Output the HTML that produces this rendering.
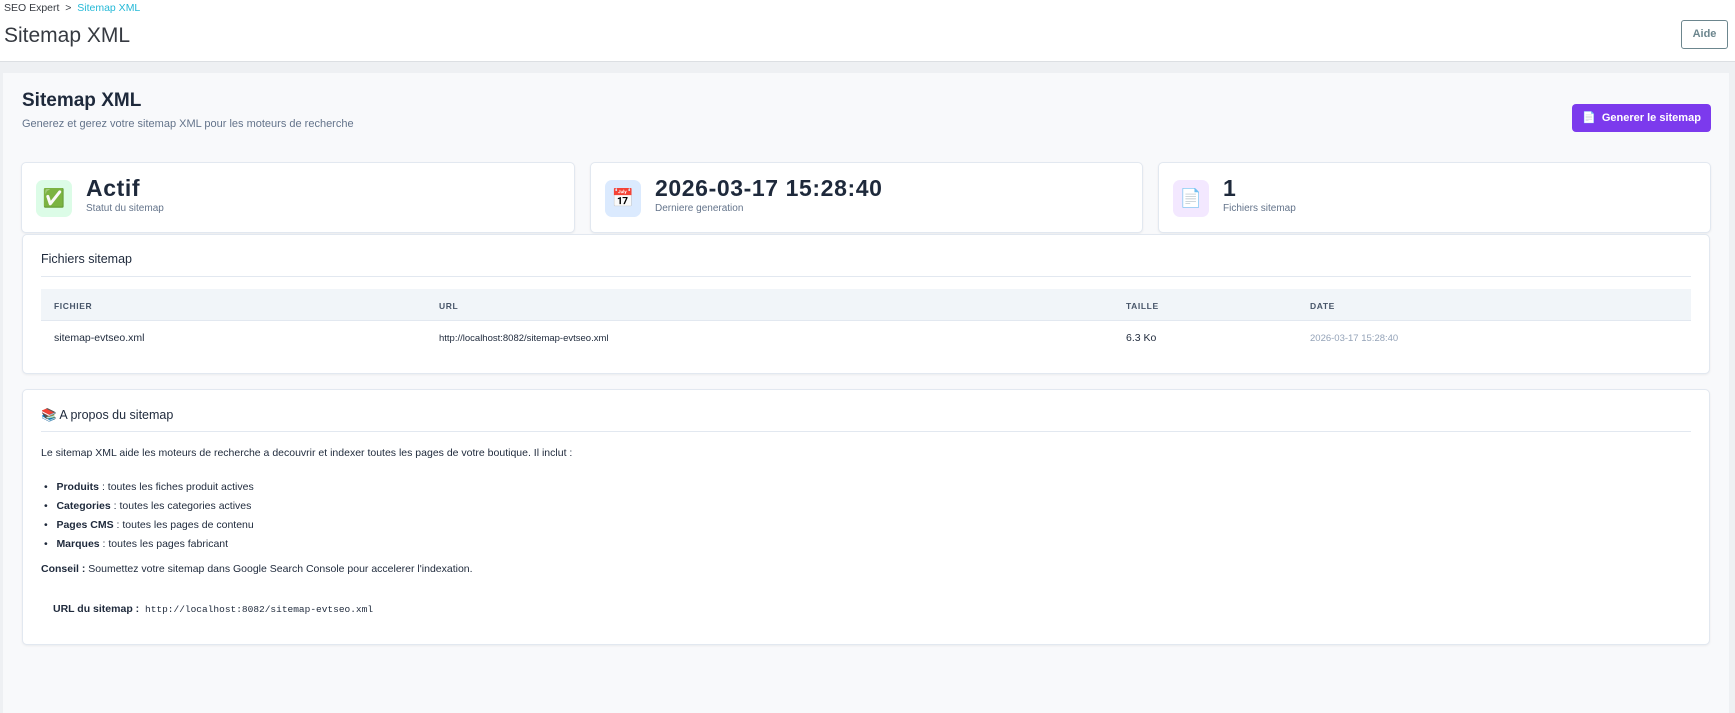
<!DOCTYPE html>
<html><head><meta charset="utf-8"><style>
*{box-sizing:border-box;margin:0;padding:0}
body{width:1735px;height:694px;overflow:hidden;background:#eef0f3;font-family:"Liberation Sans",sans-serif;color:#1e293b;position:relative}
.hdr{position:absolute;left:0;top:0;width:1735px;height:62px;background:#fff;border-bottom:1px solid #dcdfe3}
.bc{position:absolute;left:4px;top:2px;font-size:10.5px;color:#363a41}
.bc span{color:#25b9d7}
.pt{position:absolute;left:4px;top:24px;font-size:21px;color:#363a41;font-weight:300}
.aide{position:absolute;left:1681px;top:20px;width:47px;height:29px;border:1px solid #6c868e;border-radius:3px;font-size:11px;font-weight:bold;color:#6c868e;text-align:center;line-height:27px}
.panel{position:absolute;left:3px;top:73px;width:1726px;height:640px;background:#f8f9fb}
.abs{position:absolute}
.card{position:absolute;background:#fff;border:1px solid #e2e8f0;border-radius:5px;box-shadow:0 1px 2px rgba(0,0,0,.06)}
.ic{position:absolute;left:14px;top:17px;width:36px;height:37px;border-radius:7px;font-size:18px;text-align:center;line-height:37px}
.val{position:absolute;left:64px;top:12px;font-size:23px;font-weight:bold;color:#1e293b;letter-spacing:.6px}
.lab{position:absolute;left:64px;top:40px;font-size:10px;color:#64748b}
</style></head><body>
<div class="hdr">
<div class="bc">SEO Expert &nbsp;&gt;&nbsp; <span>Sitemap XML</span></div>
<div class="pt">Sitemap XML</div>
<div class="aide">Aide</div>
</div>
<div class="panel"></div>
<div class="abs" style="left:22px;top:90px;font-size:19px;font-weight:bold;color:#1e293b">Sitemap XML</div>
<div class="abs" style="left:22px;top:118px;font-size:11px;color:#64748b">Generez et gerez votre sitemap XML pour les moteurs de recherche</div>
<div class="abs" style="left:1572px;top:104px;width:139px;height:28px;background:#7c3aed;border-radius:4px;color:#fff;font-size:11px;font-weight:bold;line-height:28px;text-align:center">&#128196;&nbsp; Generer le sitemap</div>

<div class="card" style="left:21px;top:162px;width:554px;height:71px"><div class="ic" style="background:#dcfce7">✅</div><div class="val">Actif</div><div class="lab">Statut du sitemap</div></div>
<div class="card" style="left:590px;top:162px;width:553px;height:71px"><div class="ic" style="background:#dbeafe">📅</div><div class="val">2026-03-17 15:28:40</div><div class="lab">Derniere generation</div></div>
<div class="card" style="left:1158px;top:162px;width:553px;height:71px"><div class="ic" style="background:#f3e8ff">📄</div><div class="val">1</div><div class="lab">Fichiers sitemap</div></div>

<div class="card" style="left:22px;top:234px;width:1688px;height:140px">
<div class="abs" style="left:18px;top:17px;font-size:12.5px;color:#1e293b">Fichiers sitemap</div>
<div class="abs" style="left:18px;top:41px;width:1650px;height:1px;background:#e2e8f0"></div>
<div class="abs" style="left:18px;top:54px;width:1650px;height:32px;background:#f1f5f9;border-bottom:1px solid #e2e8f0"></div>
<div class="abs" style="left:31px;top:66px;font-size:8.5px;font-weight:bold;letter-spacing:.6px;color:#475569">FICHIER</div>
<div class="abs" style="left:416px;top:66px;font-size:8.5px;font-weight:bold;letter-spacing:.6px;color:#475569">URL</div>
<div class="abs" style="left:1103px;top:66px;font-size:8.5px;font-weight:bold;letter-spacing:.6px;color:#475569">TAILLE</div>
<div class="abs" style="left:1287px;top:66px;font-size:8.5px;font-weight:bold;letter-spacing:.6px;color:#475569">DATE</div>
<div class="abs" style="left:31px;top:97px;font-size:10.5px;color:#1e293b">sitemap-evtseo.xml</div>
<div class="abs" style="left:416px;top:98px;font-size:9.5px;color:#1e293b">http://localhost:8082/sitemap-evtseo.xml</div>
<div class="abs" style="left:1103px;top:97px;font-size:10.5px;color:#1e293b">6.3 Ko</div>
<div class="abs" style="left:1287px;top:98px;font-size:9.5px;color:#94a3b8">2026-03-17 15:28:40</div>
</div>

<div class="card" style="left:22px;top:389px;width:1688px;height:256px">
<div class="abs" style="left:18px;top:18px;font-size:12.5px;color:#1e293b">📚 A propos du sitemap</div>
<div class="abs" style="left:18px;top:41px;width:1650px;height:1px;background:#e2e8f0"></div>
<div class="abs" style="left:18px;top:57px;font-size:10.5px;color:#1e293b">Le sitemap XML aide les moteurs de recherche a decouvrir et indexer toutes les pages de votre boutique. Il inclut :</div>
<div class="abs" style="left:21px;top:88px;font-size:10.5px;line-height:19px;color:#1e293b">
<div>•&nbsp;&nbsp; <b>Produits</b> : toutes les fiches produit actives</div>
<div>•&nbsp;&nbsp; <b>Categories</b> : toutes les categories actives</div>
<div>•&nbsp;&nbsp; <b>Pages CMS</b> : toutes les pages de contenu</div>
<div>•&nbsp;&nbsp; <b>Marques</b> : toutes les pages fabricant</div>
</div>
<div class="abs" style="left:18px;top:173px;font-size:10.5px;color:#1e293b"><b>Conseil :</b> Soumettez votre sitemap dans Google Search Console pour accelerer l'indexation.</div>
<div class="abs" style="left:30px;top:213px;font-size:10.5px;color:#1e293b"><b>URL du sitemap :</b>&nbsp; <span style="font-family:'Liberation Mono',monospace;font-size:9.5px">http://localhost:8082/sitemap-evtseo.xml</span></div>
</div>
</body></html>
